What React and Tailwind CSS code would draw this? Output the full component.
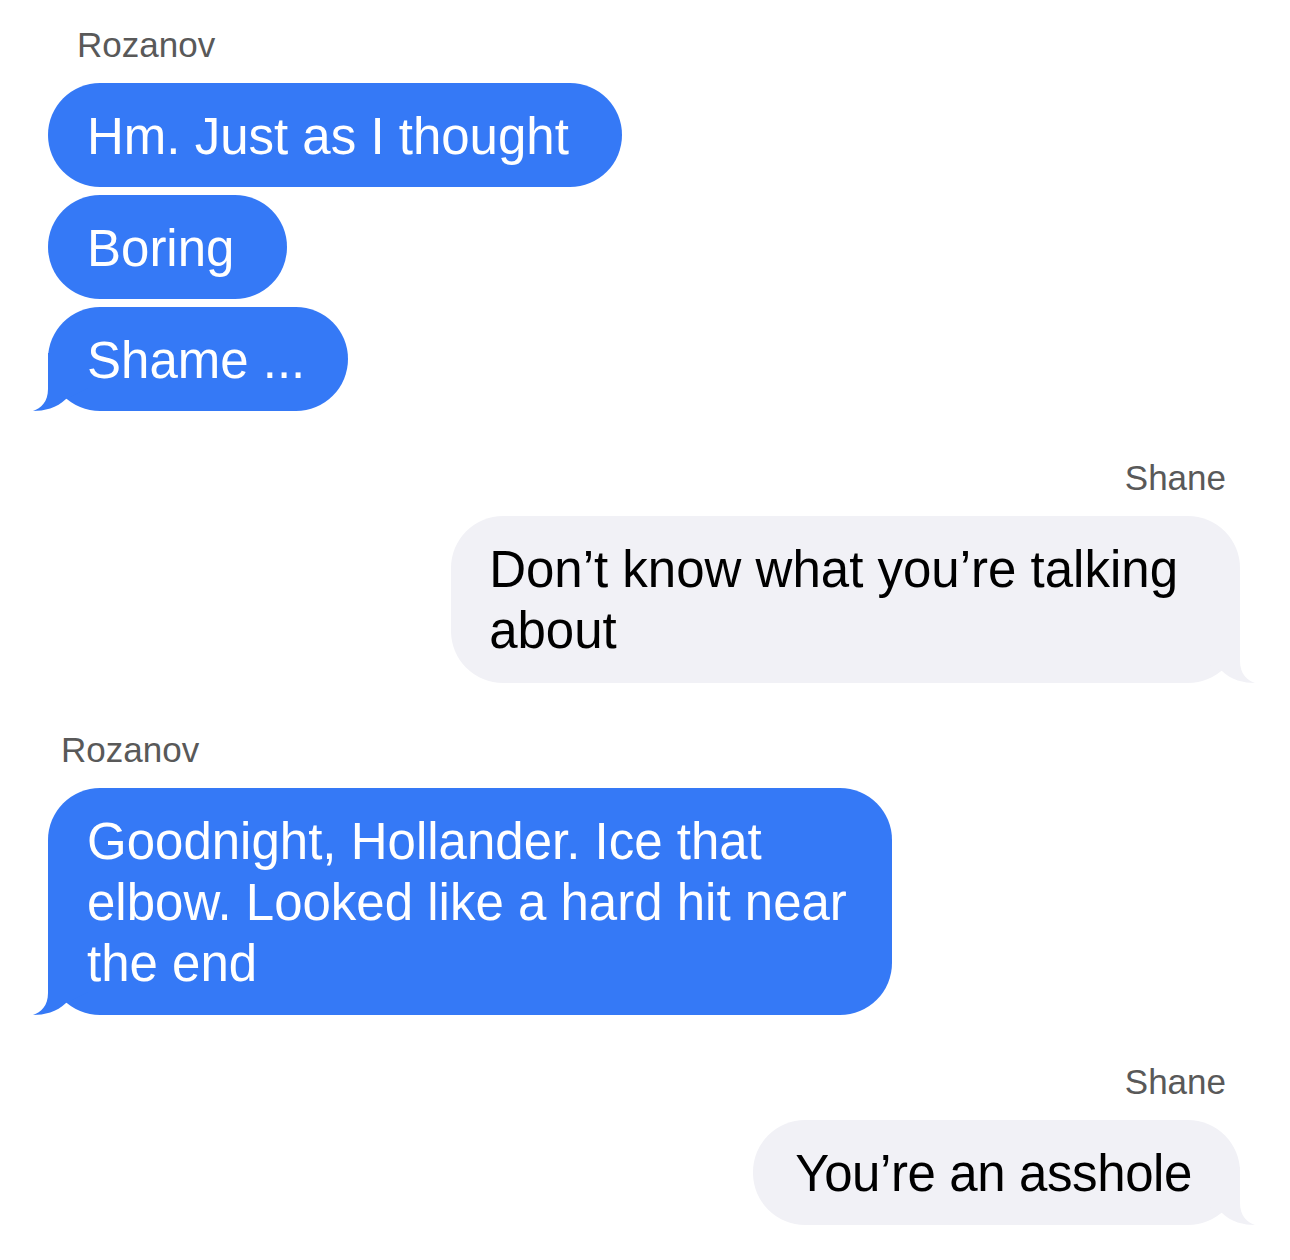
import React from "react";

function Tail({ side, color }) {
  const pos = side === "left" ? "left-[-16px]" : "right-[-16px] -scale-x-100";
  return (
    <svg
      className={`absolute bottom-0 ${pos}`}
      width="60"
      height="60"
      viewBox="0 0 60 60"
      aria-hidden="true"
    >
      <path
        d="M16 2 L16 38 C16 51 9 57 1 60 C12 60 25 57 34 48 L58 36 L58 2 Z"
        fill={color}
      />
    </svg>
  );
}

function Bubble({ children, side = "left", tail = false, pad = "pl-[39px] pr-[53px] pb-[20px]" }) {
  const isLeft = side === "left";
  const color = isLeft ? "#3579F6" : "#F1F1F6";
  return (
    <div
      className={`relative w-fit rounded-[52px] pt-[23px] text-[51px] leading-[61px] ${pad} ${
        isLeft ? "bg-[#3579F6] text-white self-start" : "bg-[#F1F1F6] text-black self-end"
      }`}
    >
      {tail && <Tail side={side} color={color} />}
      <span className="relative whitespace-nowrap">{children}</span>
    </div>
  );
}

function Label({ children, className = "" }) {
  return (
    <div className={`h-[40px] text-[35px] leading-[40px] text-[#595959] mb-[18px] ${className}`}>
      {children}
    </div>
  );
}

export default function App() {
  return (
    <div
      className="w-[1290px] h-[1260px] bg-white overflow-hidden pt-[25px] pr-[50px] pl-[48px] flex flex-col"
      style={{ fontFamily: '"Liberation Sans", Arial, sans-serif' }}
    >
      <div className="flex flex-col">
        <Label className="ml-[29px] self-start">Rozanov</Label>
        <div className="flex flex-col gap-[8px]">
          <Bubble>Hm. Just as I thought</Bubble>
          <Bubble>Boring</Bubble>
          <Bubble tail pad="pl-[39px] pr-[43px] pb-[20px]">Shame ...</Bubble>
        </div>
      </div>

      <div className="flex flex-col mt-[47px]">
        <Label className="mr-[14px] self-end">Shane</Label>
        <Bubble side="right" tail pad="pl-[38px] pr-[62px] pb-[22px]">
          Don’t know what you’re talking
          <br />
          about
        </Bubble>
      </div>

      <div className="flex flex-col mt-[47px]">
        <Label className="ml-[13px] self-start">Rozanov</Label>
        <Bubble tail pad="pl-[39px] pr-[45px] pb-[21px]">
          Goodnight, Hollander. Ice that
          <br />
          elbow. Looked like a hard hit near
          <br />
          the end
        </Bubble>
      </div>

      <div className="flex flex-col mt-[47px]">
        <Label className="mr-[14px] self-end">Shane</Label>
        <Bubble side="right" tail pad="pl-[42px] pr-[48px] pb-[21px] tracking-[-0.4px]">
          You’re an asshole
        </Bubble>
      </div>
    </div>
  );
}
